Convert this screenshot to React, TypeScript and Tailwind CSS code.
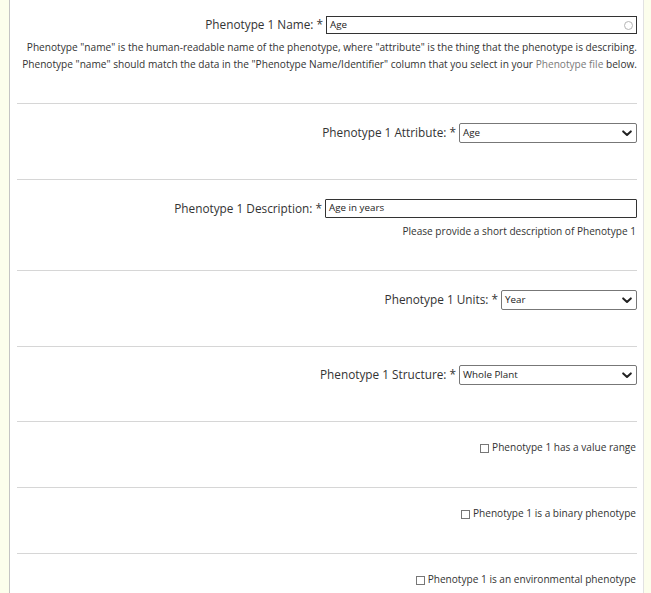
import React from 'react';

const font = { fontFamily: '"Open Sans", "Noto Sans", sans-serif' };

function Chevron() {
  return (
    <svg width="10" height="7" viewBox="0 0 10 7" className="pointer-events-none absolute right-[4px] top-[6px]">
      <path d="M1.2 1.4 L5 5 L8.8 1.4" fill="none" stroke="#222" strokeWidth="2" strokeLinecap="round" strokeLinejoin="round" />
    </svg>
  );
}

function SelectRow({ label, value, width }: { label: string; value: string; width: string }) {
  return (
    <div className="flex justify-end items-center">
      <span className="text-[11.8px] text-[#333] mr-[3px]">{label}</span>
      <div
        className={`relative ${width} h-[20px] border border-[#777] rounded-[2px] bg-white pl-[3px] flex items-center`}
      >
        <span className="text-[9.8px] text-[#222]">{value}</span>
        <Chevron />
      </div>
    </div>
  );
}

function CheckRow({ label }: { label: string }) {
  return (
    <div className="flex justify-end items-center h-[14px]">
      <span className="w-[9px] h-[9px] border border-[#777] bg-white mr-[3px]" />
      <span className="text-[10.1px] text-[#333]">{label}</span>
    </div>
  );
}

export default function App() {
  return (
    <div className="min-h-screen bg-[#fcfeec] flex" style={font}>
      <div className="w-[9px] shrink-0" />
      <div className="flex-1 bg-white border-l border-[#c4c4c4] border-r border-r-[#e2e2e2] pl-[7px] pr-[6px]">
        {/* name */}
        <div className="pt-[16px] pb-[30px] border-b border-[#d6d6d6]">
          <div className="flex justify-end items-center">
            <span className="text-[11.8px] text-[#333] mr-[3px]">Phenotype 1 Name: *</span>
            <div className="relative w-[311px] h-[18px] border border-[#333] flex items-center pl-[3px]">
              <span className="text-[9.8px] text-[#222]">Age</span>
              <span className="absolute right-[3px] top-[4px] w-[9px] h-[9px] rounded-full border-[1.5px] border-[#b5b5b5]" />
            </div>
          </div>
          <p className="mt-[5px] text-right text-[10.15px] leading-[17px] text-[#333] whitespace-nowrap">
            Phenotype "name" is the human-readable name of the phenotype, where "attribute" is the thing that the phenotype is describing.
            <br />
            Phenotype "name" should match the data in the "Phenotype Name/Identifier" column that you select in your{' '}
            <span className="text-[#7a7a7a]">Phenotype file</span> below.
          </p>
        </div>

        {/* attribute */}
        <div className="pt-[19px] pb-[36px] border-b border-[#d6d6d6]">
          <SelectRow label="Phenotype 1 Attribute: *" value="Age" width="w-[178px]" />
        </div>

        {/* description */}
        <div className="pt-[19px] pb-[32px] border-b border-[#d6d6d6]">
          <div className="flex justify-end items-center">
            <span className="text-[11.8px] text-[#333] mr-[3px]">Phenotype 1 Description: *</span>
            <div className="w-[312px] h-[19px] border border-[#333] rounded-[1px] flex items-center pl-[3px]">
              <span className="text-[9.8px] text-[#222]">Age in years</span>
            </div>
          </div>
          <p className="mt-[6px] text-right text-[10.1px] leading-[14px] text-[#333] pr-[1px]">
            Please provide a short description of Phenotype 1
          </p>
        </div>

        {/* units */}
        <div className="pt-[19px] pb-[36px] border-b border-[#d6d6d6]">
          <SelectRow label="Phenotype 1 Units: *" value="Year" width="w-[136px]" />
        </div>

        {/* structure */}
        <div className="pt-[18px] pb-[36px] border-b border-[#d6d6d6]">
          <SelectRow label="Phenotype 1 Structure: *" value="Whole Plant" width="w-[178px]" />
        </div>

        <div className="pt-[19px] pb-[32px] border-b border-[#d6d6d6] pr-[1px]">
          <CheckRow label="Phenotype 1 has a value range" />
        </div>
        <div className="pt-[19px] pb-[32px] border-b border-[#d6d6d6] pr-[1px]">
          <CheckRow label="Phenotype 1 is a binary phenotype" />
        </div>
        <div className="pt-[19px] pb-[32px] pr-[1px]">
          <CheckRow label="Phenotype 1 is an environmental phenotype" />
        </div>
      </div>
      <div className="w-[7px] shrink-0" />
    </div>
  );
}
